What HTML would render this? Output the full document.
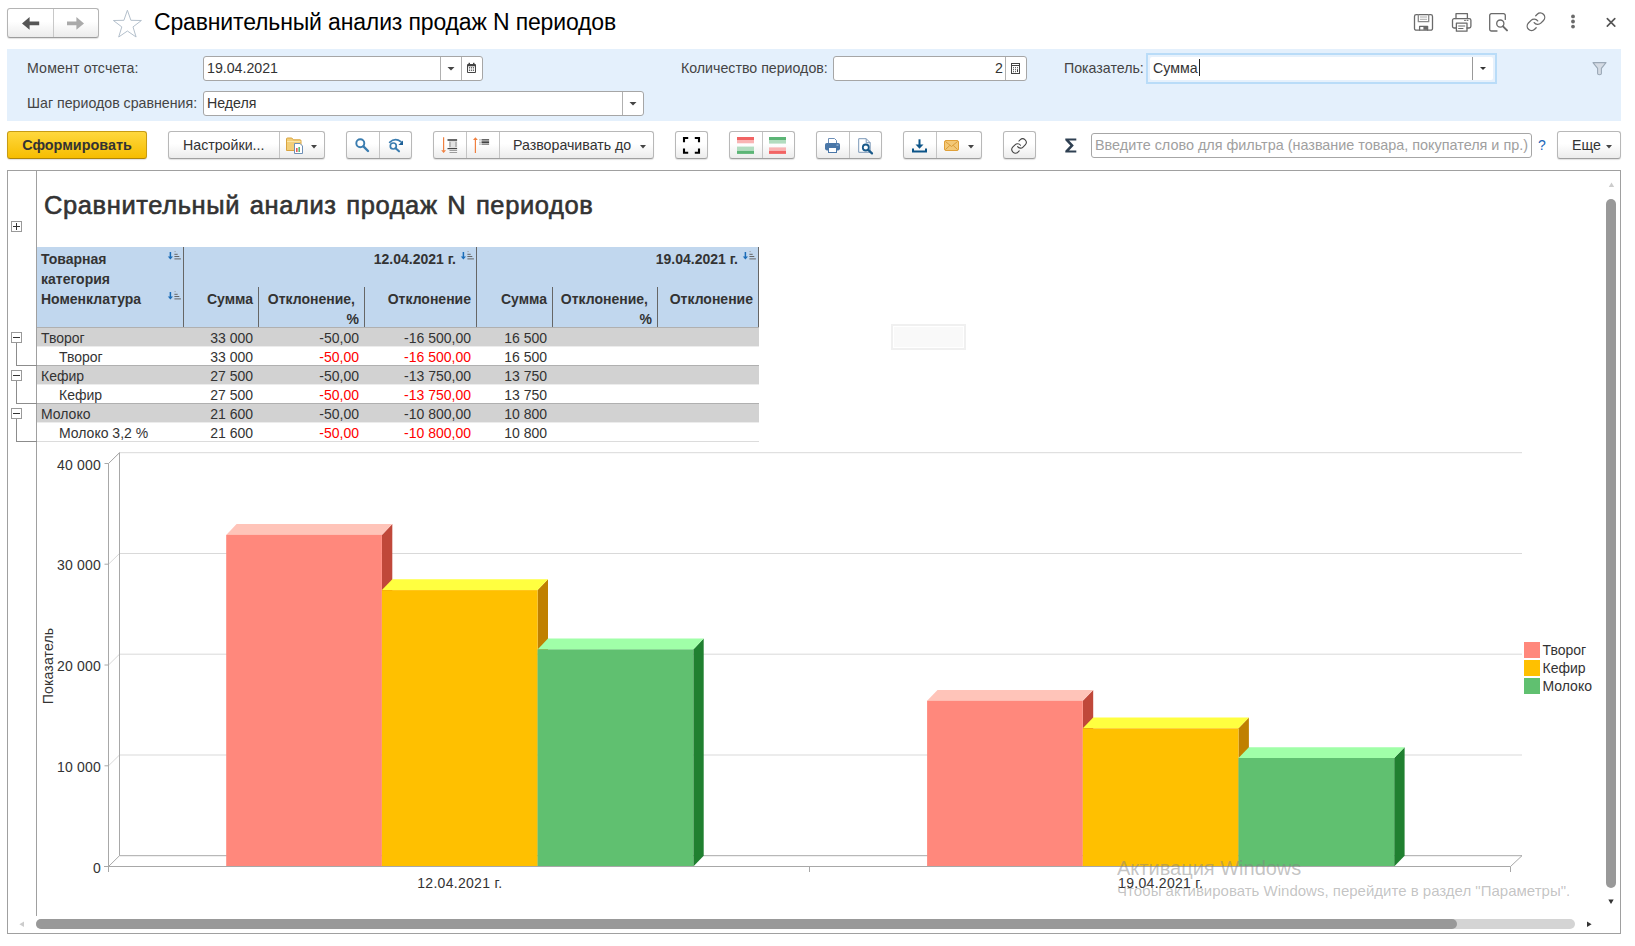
<!DOCTYPE html>
<html lang="ru"><head><meta charset="utf-8"><title>Сравнительный анализ продаж N периодов</title>
<style>
*{box-sizing:border-box;margin:0;padding:0}
html,body{width:1635px;height:946px;overflow:hidden;background:#fff}
body{font-family:"Liberation Sans",sans-serif;font-size:14.2px;color:#333;position:relative}
.a{position:absolute;white-space:nowrap}
.btn{position:absolute;top:131px;height:28px;border:1px solid #b8b8b8;border-bottom-color:#a0a0a0;border-radius:3px;background:linear-gradient(#ffffff,#ffffff 45%,#ececec);box-shadow:0 1px 1px rgba(0,0,0,.12)}
.btn i{position:absolute;top:0;bottom:0;width:1px;background:#c4c4c4}
.btn svg{position:absolute}
.inp{position:absolute;height:25px;border:1px solid #a6a6a6;border-radius:3px;background:#fff}
.inp i{position:absolute;top:0;bottom:0;width:1px;background:#b0b0b0}
.lbl{position:absolute;white-space:nowrap;color:#444;line-height:16px}
.car{position:absolute;width:0;height:0;border-left:3.5px solid transparent;border-right:3.5px solid transparent;border-top:4px solid #333}
</style></head><body>

<!-- title bar -->
<div id="nav" class="a" style="left:7px;top:8px;width:92px;height:30px;border:1px solid #b4b4b4;border-bottom-color:#9c9c9c;border-radius:3px;background:linear-gradient(#fff,#fff 45%,#ebebeb);box-shadow:0 1px 1px rgba(0,0,0,.12)">
 <i class="a" style="left:45px;top:0;bottom:0;width:1px;background:#c8c8c8"></i>
 <svg class="a" style="left:-1px;top:-1px" width="92" height="30" viewBox="7 8 92 30"><path d="M22 23.4 29.6 17v4.6H39.2v3.6H29.6v4.6z" fill="#555"/><path d="M84 23.4 76.4 17v4.6H67v3.6h9.4v4.6z" fill="#aaa"/></svg>
</div>
<svg class="a" style="left:111px;top:7px" width="32" height="32" viewBox="111 7 32 32"><path d="M127.4 10.2 130.9 20.3 141.4 20.5 133 26.9 136.1 37 127.4 31 118.7 37 121.8 26.9 113.4 20.5 123.9 20.3z" fill="#fff" stroke="#b4c0cc" stroke-width="1" stroke-linejoin="miter"/></svg>
<!-- top right icons -->
<svg class="a" style="left:1410px;top:10px" width="212" height="26" viewBox="1410 10 212 26" fill="none" stroke="#6a6a6a" stroke-width="1.3" stroke-linecap="round" stroke-linejoin="round">
 <path d="M1416.3 14.7h14.4a1.8 1.8 0 0 1 1.8 1.8v11.9a1.8 1.8 0 0 1-1.8 1.8h-14.4a1.8 1.8 0 0 1-1.8-1.8V16.5a1.8 1.8 0 0 1 1.8-1.8z"/><path d="M1418.3 14.7v7h10.4v-7" stroke="#8a8a8a"/><path d="M1420.3 17h6.4M1420.3 19.3h6.4" stroke="#aaa" stroke-width="1"/><path d="M1419.6 30v-3.7h8v3.7" /><rect x="1423.4" y="26.8" width="3.6" height="3" fill="#6a6a6a" stroke="none"/>
 <path d="M1456 18.6v-4.9h11.4v4.9"/><path d="M1456.4 28h-2.2a1.7 1.7 0 0 1-1.7-1.7v-6a1.7 1.7 0 0 1 1.7-1.7h15a1.7 1.7 0 0 1 1.7 1.7v6a1.7 1.7 0 0 1-1.7 1.7h-2.2"/><path d="M1456.4 23.2h10.6v8h-10.600z"/><path d="M1458.600 26h6.200M1458.600 28.500h4.400M1464.500 20.400h1M1467 20.400h1" stroke-width="1"/>
 <path d="M1497 31h-5.600a1.700 1.700 0 0 1-1.700-1.700V15.400a1.700 1.700 0 0 1 1.700-1.700h12.200a1.700 1.700 0 0 1 1.700 1.700v4"/><circle cx="1500.300" cy="23.600" r="3.600"/><path d="M1503 26.400 1507 30.400" stroke-width="2"/>
 <g transform="translate(1525.400,11.200) scale(0.880)" stroke-width="1.500"><path d="M10 13a5 5 0 0 0 7.540.540l3-3a5 5 0 0 0-7.070-7.070l-1.720 1.710"/><path d="M14 11a5 5 0 0 0-7.540-.540l-3 3a5 5 0 0 0 7.070 7.070l1.710-1.710"/></g>
 <g fill="#6a6a6a" stroke="none"><circle cx="1573" cy="16.400" r="1.900"/><circle cx="1573" cy="21.500" r="1.900"/><circle cx="1573" cy="26.600" r="1.900"/></g>
 <path d="M1607.300 18.600 1614.800 26.100M1614.800 18.600 1607.300 26.100" stroke="#555" stroke-width="1.600"/>
</svg>

<div id="title" class="a" style="left:154px;top:9px;font-size:23px;letter-spacing:-.15px;line-height:26px;color:#000">Сравнительный анализ продаж N периодов</div>

<!-- blue panel -->
<div id="panel" class="a" style="left:7px;top:49px;width:1614px;height:72px;background:#e4f0fc"></div>
<svg class="a" style="left:1590px;top:60px" width="20" height="18" viewBox="1590 60 20 18"><path d="M1593 62.600h13l-4.600 5.700v5.200q0 1.200-1.900 1.200t-1.900-1.200v-5.200z" fill="#d4dbe4" stroke="#9aa8b6" stroke-width="1.100" stroke-linejoin="round"/></svg>
<div class="lbl" style="left:27px;top:60px;letter-spacing:.13px">Момент отсчета:</div>
<div class="lbl" style="left:27px;top:95px">Шаг периодов сравнения:</div>
<div class="inp" style="left:203px;top:56px;width:280px"><span class="a" style="left:3px;top:3px;line-height:16px">19.04.2021</span><i style="left:236px"></i><i style="left:257px"></i></div>
<div class="inp" style="left:203px;top:91px;width:441px"><span class="a" style="left:3px;top:3px;line-height:16px">Неделя</span><i style="left:418px"></i></div>
<div class="lbl" style="left:681px;top:60px">Количество периодов:</div>
<div class="inp" style="left:833px;top:56px;width:194px"><span class="a" style="right:23px;top:3px;line-height:16px">2</span><i style="left:171px"></i></div>
<div class="lbl" style="left:1064px;top:60px">Показатель:</div>
<div class="a" style="left:1146px;top:53px;width:351px;height:31px;border:2px solid #b9dcf8;background:#e6f1fc"><div class="a" style="left:2px;top:2px;right:2px;bottom:2px;background:#fff;border-radius:2px"></div><span class="a" style="left:5px;top:5px;line-height:16px">Сумма</span><i class="a" style="left:51px;top:4px;width:1px;height:17px;background:#222"></i><i class="a" style="left:324px;top:2px;bottom:2px;width:1px;background:#999"></i><b class="car" style="left:332px;top:12px;border-left-width:3px;border-right-width:3px;border-top-width:3.500px"></b></div>

<!-- toolbar -->
<div class="btn" style="left:7px;width:140px;background:linear-gradient(#ffd83e,#f6bd00);border-color:#c79c14;border-bottom-color:#b08508;color:#333;font-weight:700;font-size:14.400px;text-align:center;line-height:26px">Сформировать</div>
<div class="btn" style="left:168px;width:157px"><span class="a" style="left:14px;top:5px;line-height:16px">Настройки...</span><i style="left:110px"></i></div>
<div class="btn" style="left:346px;width:66px"><i style="left:32px"></i></div>
<div class="btn" style="left:433px;width:221px"><i style="left:32px"></i><i style="left:65px"></i><span class="a" style="left:79px;top:5px;line-height:16px">Разворачивать до</span></div>
<div class="btn" style="left:675px;width:33px"></div>
<div class="btn" style="left:729px;width:66px"><i style="left:32px"></i></div>
<div class="btn" style="left:816px;width:66px"><i style="left:32px"></i></div>
<div class="btn" style="left:903px;width:79px"><i style="left:32px"></i></div>
<div class="btn" style="left:1003px;width:33px"></div>
<div class="inp" style="left:1091px;top:133px;width:441px;height:25px"><span class="a" style="left:3px;top:3px;line-height:16px;font-size:14.400px;color:#a0a0a0">Введите слово для фильтра (название товара, покупателя и пр.)</span></div>
<div class="a" style="left:1538px;top:137px;line-height:16px;color:#1a66b8;font-size:14px">?</div>
<div class="btn" style="left:1557px;width:64px"><span class="a" style="left:14px;top:5px;line-height:16px">Еще</span></div>


<!-- toolbar + field icons -->
<svg class="a" style="left:0;top:50px;pointer-events:none" width="1635" height="115" viewBox="0 50 1635 115">
 <!-- carets -->
 <g fill="#444"><path d="M447.500 67h7l-3.500 3.600z"/><path d="M629.500 102h7l-3.500 3.600z"/><path d="M311 145h6l-3 3.400z"/><path d="M640 145h6l-3 3.400z"/><path d="M968 145h6l-3 3.400z"/><path d="M1606 145h6l-3 3.400z"/></g>
 <!-- calendar -->
 <g fill="#444"><rect x="467" y="64" width="9" height="9" rx="1"/><rect x="468.500" y="62.800" width="1.500" height="2.400"/><rect x="473" y="62.800" width="1.500" height="2.400"/></g>
 <rect x="468" y="66.300" width="7" height="5.700" fill="#fff"/>
 <g fill="#444"><rect x="468.900" y="67.200" width="1.200" height="1.200"/><rect x="470.900" y="67.200" width="1.200" height="1.200"/><rect x="472.900" y="67.200" width="1.200" height="1.200"/><rect x="468.900" y="69.600" width="1.200" height="1.200"/><rect x="470.900" y="69.600" width="1.200" height="1.200"/><rect x="472.900" y="69.600" width="1.200" height="1.200"/></g>
 <!-- calculator -->
 <rect x="1011.500" y="63.500" width="8" height="10" fill="#fff" stroke="#444" stroke-width="1"/><rect x="1011.500" y="63.500" width="8" height="2" fill="none" stroke="#444" stroke-width="1"/>
 <g fill="#444"><rect x="1013" y="67.200" width="1" height="1"/><rect x="1015" y="67.200" width="1" height="1"/><rect x="1017" y="67.200" width="1" height="1"/><rect x="1013" y="69.200" width="1" height="1"/><rect x="1015" y="69.200" width="1" height="1"/><rect x="1017" y="69.200" width="1" height="2.800"/><rect x="1013" y="71.200" width="1" height="1"/><rect x="1015" y="71.200" width="1" height="1"/></g>
 <!-- folder with doc -->
 <path d="M286.500 150.500v-11.500q0-1 1-1h4.300l1.600 1.800h6.600q1 0 1 1v9.700z" fill="#f3cf78" stroke="#d9a441" stroke-width="1"/>
 <path d="M287 141.500h13.500" stroke="#fbe7a8" stroke-width="1"/>
 <path d="M294.500 143.500h5.500l2.500 2.500v7.500h-8z" fill="#fff" stroke="#6e8fb5" stroke-width="1"/>
 <rect x="296" y="148" width="1.600" height="4" fill="#e45b5b"/><rect x="298.400" y="147" width="1.600" height="5" fill="#5bb87a"/>
 <!-- magnifier -->
 <g fill="none" stroke="#3b7db0" stroke-linecap="round"><circle cx="360.300" cy="143.300" r="4" stroke-width="1.900"/><path d="M363.400 146.400 368 151" stroke-width="2.400"/>
 <circle cx="393.300" cy="146" r="3" stroke-width="1.700"/><path d="M395.600 148.300 399 151.300" stroke-width="2.100"/><path d="M389.600 142.300q5.500-5 11.400-.6" stroke-width="1.700"/></g>
 <path d="M403 140.500v4.500h-4.600z" fill="#1d5f96"/>
 <!-- sort icons -->
 <g stroke="#f08040" stroke-width="1.200" fill="#f08040"><path d="M443.600 137.300v13.500" /><path d="M441.200 150.200h4.800l-2.400 2.800z" stroke="none"/><path d="M475.400 139.500v13.400"/><path d="M473 140h4.800l-2.400-2.800z" stroke="none"/></g>
 <g fill="#444"><rect x="447.500" y="139.200" width="9.600" height="1.600"/><rect x="449" y="141.400" width="8.100" height="6" fill="#b8b8b8"/><rect x="451" y="141.400" width="4" height="6" fill="#e2e2e2"/><rect x="447.500" y="148" width="9.600" height="1.200"/><rect x="449.500" y="150.200" width="7.600" height=".8" fill="#888"/><rect x="449.500" y="152.200" width="7.600" height=".8" fill="#888"/>
 <rect x="481.500" y="139.200" width="7.600" height="1.300"/><rect x="481.500" y="141.300" width="7.600" height="1.700"/><rect x="481.500" y="143.600" width="7.600" height="1"/><rect x="479.300" y="139.400" width="1.400" height="1" fill="#888"/><rect x="479.300" y="141.700" width="1.400" height="1" fill="#888"/><rect x="479.300" y="143.600" width="1.400" height="1" fill="#888"/></g>
 <!-- fullscreen -->
 <path d="M684 142.200v-4.200h4.200M694.800 138h4.200v4.200M699 148.600v4.200h-4.200M688.200 152.800h-4.200v-4.200" fill="none" stroke="#000" stroke-width="2.100"/>
 <!-- color bars -->
 <rect x="737" y="137" width="17" height="3" fill="#f26464"/><rect x="737" y="140" width="17" height="3.300" fill="#f9b4b4"/><rect x="737" y="146.600" width="17" height="4.300" fill="#b2dcbf"/><rect x="737" y="150.900" width="17" height="3" fill="#5cb576"/>
 <rect x="769" y="137" width="17" height="3" fill="#5cb576"/><rect x="769" y="140" width="17" height="3.600" fill="#b2dcbf"/><rect x="769" y="147.400" width="17" height="3.500" fill="#f9b4b4"/><rect x="769" y="150.900" width="17" height="3" fill="#f26464"/>
 <!-- printer -->
 <path d="M828.500 144v-5.500h6l2 2v3.500z" fill="#fff" stroke="#6d8fb8" stroke-width="1"/>
 <rect x="825" y="143" width="15" height="7.400" rx="1.800" fill="#4a77a8"/><rect x="828.500" y="147.500" width="8" height="5" fill="#fff" stroke="#4a77a8" stroke-width="1"/><rect x="836.500" y="144.600" width="2" height="1" fill="#a8c4e0"/>
 <!-- preview -->
 <path d="M858.700 138.700h7.500l4 4v9.600h-11.500z" fill="#fff" stroke="#7b98b8" stroke-width="1"/><path d="M866.200 138.700v4h4" fill="none" stroke="#7b98b8" stroke-width="1"/>
 <circle cx="865.800" cy="147.500" r="3" fill="#fff" stroke="#1a5a8a" stroke-width="1.800"/><path d="M868.200 149.900 872 153.400" stroke="#1a5a8a" stroke-width="2.200" stroke-linecap="round"/>
 <!-- download -->
 <path d="M919.500 139.300v6" stroke="#0c5488" stroke-width="2"/><path d="M915.500 144.500h8l-4 4.300z" fill="#0c5488"/><path d="M913 148.500v3h13v-3" fill="none" stroke="#0c5488" stroke-width="2"/>
 <!-- envelope -->
 <rect x="944.500" y="140.500" width="14" height="10" rx="1.500" fill="#f3c877" stroke="#e0a038" stroke-width="1"/><path d="M945.500 141.500 951.500 146.500 957.500 141.500M945.500 149.500 949.800 145.400M957.500 149.500 953.200 145.400" fill="none" stroke="#d89630" stroke-width=".9"/>
 <!-- link -->
 <g transform="translate(1010.400,137.300) scale(0.720)" fill="none" stroke="#444" stroke-width="1.500" stroke-linecap="round"><path d="M10 13a5 5 0 0 0 7.540.540l3-3a5 5 0 0 0-7.070-7.070l-1.720 1.710"/><path d="M14 11a5 5 0 0 0-7.540-.540l-3 3a5 5 0 0 0 7.070 7.070l1.710-1.710"/></g>
 <!-- sigma -->
 <path d="M1065.300 138.400h11v2.200h-7.200l4.700 4.900-4.700 4.900h7.200v2.200h-11v-1.900l5-5.200-5-5.200z" fill="#2f4052"/>
</svg>

<!-- report frame -->
<div id="frame" class="a" style="left:7px;top:170px;width:1614px;height:764px;border:1px solid #a0a0a0"></div>
<div class="a" style="left:36px;top:171px;width:1px;height:745px;background:#a0a0a0"></div>


<style>
.rt{position:absolute;left:44px;top:190px;font-size:25.500px;letter-spacing:.6px;word-spacing:2px;line-height:30px;color:#333;-webkit-text-stroke:.6px #333;white-space:nowrap}
.h{position:absolute;white-space:nowrap;font-weight:700;font-size:14px;line-height:16px;color:#333}
.h.r{text-align:right}
.c{position:absolute;white-space:nowrap;font-size:14px;line-height:16px;color:#333}
.c.r{text-align:right}
.red{color:#ff0000}
.ob{position:absolute;left:11px;width:11px;height:11px;border:1px solid #999;background:#fff}
.ob:before{content:"";position:absolute;left:1px;top:4px;width:7px;height:1px;background:#333}
.ob.p:before{left:1px;width:7px}
.ob.p:after{content:"";position:absolute;left:4px;top:1px;width:1px;height:7px;background:#333}
.vl{position:absolute;width:1px;background:#666}
.gr{position:absolute;left:37px;width:722px;height:18px;background:#d2d2d2;box-shadow:0 1px 0 #ececec}
.ol{position:absolute;background:#8c8c8c}
</style>
<div class="rt">Сравнительный анализ продаж N периодов</div>
<div class="ob p" style="top:221px"></div>
<!-- header -->
<div class="a" style="left:37px;top:247px;width:722px;height:80px;background:#c1d7ee"></div>
<div class="vl" style="left:183px;top:247px;height:80px"></div>
<div class="vl" style="left:258px;top:287px;height:40px"></div>
<div class="vl" style="left:364px;top:287px;height:40px"></div>
<div class="vl" style="left:476px;top:247px;height:80px"></div>
<div class="vl" style="left:552px;top:287px;height:40px"></div>
<div class="vl" style="left:657px;top:287px;height:40px"></div>
<div class="vl" style="left:758px;top:247px;height:80px"></div>
<div class="h" style="left:41px;top:251px">Товарная</div>
<div class="h" style="left:41px;top:271px">категория</div>
<div class="h" style="left:41px;top:291px">Номенклатура</div>
<div class="h r" style="right:1179px;top:251px">12.04.2021 г.</div>
<div class="h r" style="right:897px;top:251px">19.04.2021 г.</div>
<div class="h r" style="right:1382px;top:291px">Сумма</div>
<div class="h r" style="right:1280px;top:291px">Отклонение,</div>
<div class="h r" style="right:1276px;top:311px">%</div>
<div class="h r" style="right:1164px;top:291px">Отклонение</div>
<div class="h r" style="right:1088px;top:291px">Сумма</div>
<div class="h r" style="right:987px;top:291px">Отклонение,</div>
<div class="h r" style="right:983px;top:311px">%</div>
<div class="h r" style="right:882px;top:291px">Отклонение</div>
<svg class="a" style="left:165px;top:250px" width="595" height="52" viewBox="165 250 595 52">
 <g transform="translate(165,250)"><path d="M5.400 2v6" stroke="#1a6cb8" stroke-width="1.500" fill="none"/><path d="M2.800 6.600h5.200l-2.600 2.900z" fill="#1a6cb8"/><path d="M9.400 1.600h1.400" stroke="#999" stroke-width=".8"/><path d="M9.400 4.300h3.300M9.400 6.500h4.900M9.400 8.900h6.500" stroke="#666" stroke-width="1"/></g><g transform="translate(165,290)"><path d="M5.400 2v6" stroke="#1a6cb8" stroke-width="1.500" fill="none"/><path d="M2.800 6.600h5.200l-2.600 2.900z" fill="#1a6cb8"/><path d="M9.400 1.600h1.400" stroke="#999" stroke-width=".8"/><path d="M9.400 4.300h3.300M9.400 6.500h4.900M9.400 8.900h6.500" stroke="#666" stroke-width="1"/></g><g transform="translate(458,250)"><path d="M5.400 2v6" stroke="#1a6cb8" stroke-width="1.500" fill="none"/><path d="M2.800 6.600h5.200l-2.600 2.900z" fill="#1a6cb8"/><path d="M9.400 1.600h1.400" stroke="#999" stroke-width=".8"/><path d="M9.400 4.300h3.300M9.400 6.500h4.900M9.400 8.900h6.500" stroke="#666" stroke-width="1"/></g><g transform="translate(740,250)"><path d="M5.400 2v6" stroke="#1a6cb8" stroke-width="1.500" fill="none"/><path d="M2.800 6.600h5.200l-2.600 2.900z" fill="#1a6cb8"/><path d="M9.400 1.600h1.400" stroke="#999" stroke-width=".8"/><path d="M9.400 4.300h3.300M9.400 6.500h4.900M9.400 8.900h6.500" stroke="#666" stroke-width="1"/></g>
</svg>
<!-- rows -->
<div class="gr" style="top:328px"></div><div class="gr" style="top:366px"></div><div class="gr" style="top:404px"></div>
<div class="a" style="left:37px;top:365px;width:722px;height:1px;background:#b0b0b0"></div>
<div class="a" style="left:37px;top:403px;width:722px;height:1px;background:#b0b0b0"></div>
<div class="a" style="left:37px;top:441px;width:722px;height:1px;background:#dcdcdc"></div>
<div class="a" style="left:37px;top:327px;width:722px;height:1px;background:#b0b0b0"></div>
<div class="ob" style="top:332px"></div><div class="ob" style="top:370px"></div><div class="ob" style="top:408px"></div>
<div class="ol" style="left:16px;top:343px;width:1px;height:23px"></div><div class="ol" style="left:16px;top:365px;width:21px;height:1px"></div>
<div class="ol" style="left:16px;top:381px;width:1px;height:23px"></div><div class="ol" style="left:16px;top:403px;width:21px;height:1px"></div>
<div class="ol" style="left:16px;top:419px;width:1px;height:23px"></div><div class="ol" style="left:16px;top:441px;width:21px;height:1px"></div>
<div class="c" style="left:41px;top:330px">Творог</div><div class="c r" style="right:1382px;top:330px">33 000</div><div class="c r" style="right:1276px;top:330px">-50,00</div><div class="c r" style="right:1164px;top:330px">-16 500,00</div><div class="c r" style="right:1088px;top:330px">16 500</div>
<div class="c" style="left:59px;top:349px">Творог</div><div class="c r" style="right:1382px;top:349px">33 000</div><div class="c r red" style="right:1276px;top:349px">-50,00</div><div class="c r red" style="right:1164px;top:349px">-16 500,00</div><div class="c r" style="right:1088px;top:349px">16 500</div>
<div class="c" style="left:41px;top:368px">Кефир</div><div class="c r" style="right:1382px;top:368px">27 500</div><div class="c r" style="right:1276px;top:368px">-50,00</div><div class="c r" style="right:1164px;top:368px">-13 750,00</div><div class="c r" style="right:1088px;top:368px">13 750</div>
<div class="c" style="left:59px;top:387px">Кефир</div><div class="c r" style="right:1382px;top:387px">27 500</div><div class="c r red" style="right:1276px;top:387px">-50,00</div><div class="c r red" style="right:1164px;top:387px">-13 750,00</div><div class="c r" style="right:1088px;top:387px">13 750</div>
<div class="c" style="left:41px;top:406px">Молоко</div><div class="c r" style="right:1382px;top:406px">21 600</div><div class="c r" style="right:1276px;top:406px">-50,00</div><div class="c r" style="right:1164px;top:406px">-10 800,00</div><div class="c r" style="right:1088px;top:406px">10 800</div>
<div class="c" style="left:59px;top:425px">Молоко 3,2 %</div><div class="c r" style="right:1382px;top:425px">21 600</div><div class="c r red" style="right:1276px;top:425px">-50,00</div><div class="c r red" style="right:1164px;top:425px">-10 800,00</div><div class="c r" style="right:1088px;top:425px">10 800</div>

<svg class="a" style="left:37px;top:445px" width="1568" height="470" viewBox="37 445 1568 470" font-family="'Liberation Sans',sans-serif" font-size="14" fill="#333">
<path d="M108.500 765.8L119.500 755.0H1522" fill="none" stroke="#d9d9d9" stroke-width="1"/>
<path d="M108.500 665.0L119.500 654.2H1522" fill="none" stroke="#d9d9d9" stroke-width="1"/>
<path d="M108.500 564.2L119.500 553.5H1522" fill="none" stroke="#d9d9d9" stroke-width="1"/>
<path d="M108.500 463.5L119.500 452.7H1522" fill="none" stroke="#d9d9d9" stroke-width="1"/>
<path d="M119.500 452.7V855.7H1522L1510.500 866.5" fill="none" stroke="#a8a8a8" stroke-width="1"/>
<path d="M108.500 866.5L119.500 855.7" fill="none" stroke="#a8a8a8" stroke-width="1"/>
<path d="M108.500 463.5L119.500 452.7" fill="none" stroke="#a8a8a8" stroke-width="1"/>
<path d="M104.500 765.8H108.500" stroke="#a8a8a8" stroke-width="1"/>
<path d="M104.500 665.0H108.500" stroke="#a8a8a8" stroke-width="1"/>
<path d="M104.500 564.2H108.500" stroke="#a8a8a8" stroke-width="1"/>
<path d="M104.500 463.5H108.500" stroke="#a8a8a8" stroke-width="1"/>
<text x="101" y="872.5" text-anchor="end" letter-spacing=".2">0</text>
<text x="101" y="771.7" text-anchor="end" letter-spacing=".2">10 000</text>
<text x="101" y="671.0" text-anchor="end" letter-spacing=".2">20 000</text>
<text x="101" y="570.3" text-anchor="end" letter-spacing=".2">30 000</text>
<text x="101" y="469.5" text-anchor="end" letter-spacing=".2">40 000</text>
<text transform="translate(52.800,666) rotate(-90)" text-anchor="middle" letter-spacing=".15">Показатель</text>
<text x="459.800" y="888" text-anchor="middle" letter-spacing=".3">12.04.2021 г.</text>
<text x="1160.700" y="888" text-anchor="middle" letter-spacing=".3">19.04.2021 г.</text>
<path d="M381.9 534.9l10.400 -10.800V855.7l-10.400 10.800z" fill="#c0483a"/>
<path d="M537.6 590.1l10.400 -10.800V855.7l-10.400 10.800z" fill="#c08000"/>
<path d="M693.3 649.4l10.400 -10.800V855.7l-10.400 10.800z" fill="#208030"/>
<path d="M226.2 534.9l10.400 -10.800h155.7l-10.400 10.800z" fill="#ffc4b9"/>
<rect x="226.2" y="534.9" width="155.7" height="331.6" fill="#ff887c"/>
<path d="M381.9 590.1l10.400 -10.800h155.7l-10.400 10.800z" fill="#ffff40"/>
<rect x="381.9" y="590.1" width="155.7" height="276.4" fill="#ffc000"/>
<path d="M537.6 649.4l10.400 -10.800h155.7l-10.400 10.800z" fill="#a0ffa8"/>
<rect x="537.6" y="649.4" width="155.7" height="217.1" fill="#60c070"/>
<path d="M1082.8 700.7l10.400 -10.800V855.7l-10.400 10.800z" fill="#c0483a"/>
<path d="M1238.5 728.3l10.400 -10.800V855.7l-10.400 10.800z" fill="#c08000"/>
<path d="M1394.2 758.0l10.400 -10.800V855.7l-10.400 10.800z" fill="#208030"/>
<path d="M927.1 700.7l10.400 -10.800h155.7l-10.400 10.800z" fill="#ffc4b9"/>
<rect x="927.1" y="700.7" width="155.7" height="165.8" fill="#ff887c"/>
<path d="M1082.8 728.3l10.400 -10.800h155.7l-10.400 10.800z" fill="#ffff40"/>
<rect x="1082.8" y="728.3" width="155.7" height="138.2" fill="#ffc000"/>
<path d="M1238.5 758.0l10.400 -10.800h155.7l-10.400 10.800z" fill="#a0ffa8"/>
<rect x="1238.5" y="758.0" width="155.7" height="108.5" fill="#60c070"/>
<path d="M108.500 463.5V872M104 866.5H1510.500M1510.500 866.5V872M809.500 866.5V872" fill="none" stroke="#a8a8a8" stroke-width="1"/>
<rect x="1524" y="642" width="16" height="16" fill="#ff887c"/><text x="1542.500" y="655">Творог</text>
<rect x="1524" y="660" width="16" height="16" fill="#ffc000"/><text x="1542.500" y="673">Кефир</text>
<rect x="1524" y="678" width="16" height="16" fill="#60c070"/><text x="1542.500" y="691">Молоко</text>
</svg>
<div class="a" style="left:891px;top:324px;width:75px;height:26px;border:2px solid #f0f0f0;background:#fff"><div class="a" style="left:1px;top:1px;right:1px;bottom:1px;background:#f9f9f9"></div></div>
<!-- scrollbars -->
<div class="a" style="left:36px;top:919px;width:1539px;height:10px;border-radius:5px;background:#d4d4d4"></div>
<div class="a" style="left:36px;top:919px;width:1421px;height:10px;border-radius:5px;background:#999"></div>
<div class="a" style="left:1606px;top:199px;width:10px;height:689px;border-radius:5px;background:#999"></div>
<svg class="a" style="left:0;top:170px" width="1635" height="776" viewBox="0 170 1635 776"><path d="M1608.800 187h5.400l-2.700-4.600z" fill="#ccc"/><path d="M1608.300 899.500h5.400l-2.700 4.600z" fill="#333"/><path d="M24 921.500v5.600l-4.600-2.800z" fill="#ccc"/><path d="M1587 921.500v5.600l4.600-2.800z" fill="#333"/></svg>
<!-- watermark -->
<div class="a" style="left:1117px;top:856px;font-size:20px;line-height:24px;color:rgba(130,130,130,.48)">Активация Windows</div>
<div class="a" style="left:1117px;top:882px;font-size:15px;line-height:18px;color:rgba(130,130,130,.48)">Чтобы активировать Windows, перейдите в раздел "Параметры".</div>

</body></html>
